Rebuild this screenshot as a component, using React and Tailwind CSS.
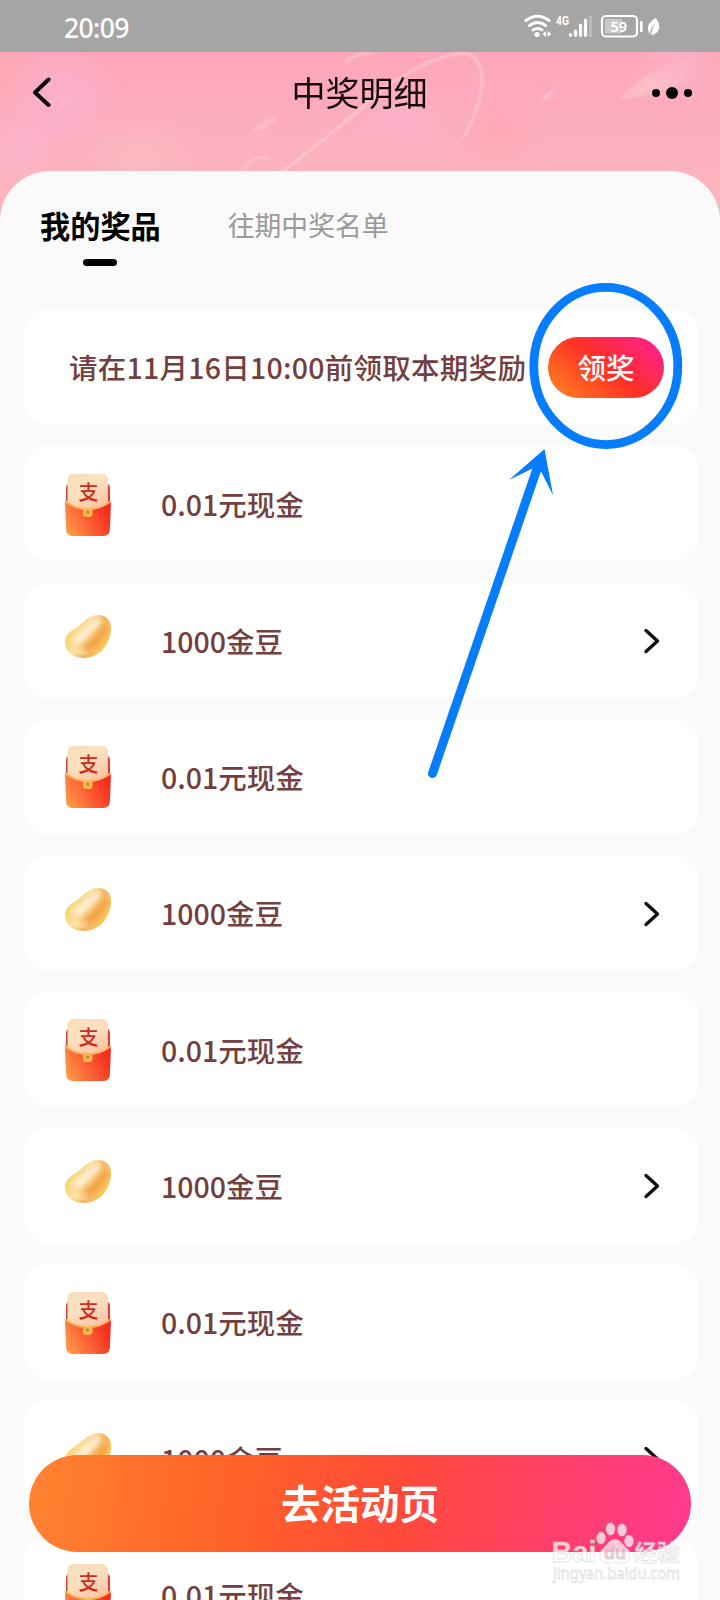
import React from "react";

const prizes = [
  { type: "cash", label: "0.01元现金" },
  { type: "bean", label: "1000金豆" },
  { type: "cash", label: "0.01元现金" },
  { type: "bean", label: "1000金豆" },
  { type: "cash", label: "0.01元现金" },
  { type: "bean", label: "1000金豆" },
  { type: "cash", label: "0.01元现金" },
  { type: "bean", label: "1000金豆" },
  { type: "cash", label: "0.01元现金" },
];

const StatusBar = () => (
  <div className="flex h-[52px] items-center justify-between bg-[#a5a5a5] pl-16 pr-[59px] text-white">
    <span className="pt-[5px] font-['Noto_Sans'] text-[26.5px] font-medium tracking-[-0.6px]">
      20:09
    </span>
    <svg width="138" height="26" viewBox="523 13 138 26" fill="none">
      {/* wifi */}
      <g stroke="#fff" strokeWidth="3" strokeLinecap="round">
        <path d="M526 20.500Q537.500 12 549 20.500" />
        <path d="M529.500 25.500Q537.500 19.500 545.500 25.500" />
        <path d="M533 30Q537.500 27 542 30" />
      </g>
      <circle cx="537" cy="34.400" r="2.500" fill="#fff" />
      <path d="M546 31v6l-3.500-3zM547.500 31v6l3.800-3z" fill="#fff" />
      <text
        x="556"
        y="24.500"
        fill="#fff"
        fontSize="12.500"
        fontWeight="700"
        fontFamily="Roboto, sans-serif"
        textLength="13"
        lengthAdjust="spacingAndGlyphs"
      >
        4G
      </text>
      {/* signal */}
      <g stroke="#fff" strokeWidth="3.200" strokeLinecap="round">
        <path d="M570.500 34.500v.8M575.500 31v4.300M580.500 25v10.300M585.500 20v15.300" />
        <path d="M590.500 16.500v19" opacity="0.25" />
      </g>
      {/* battery */}
      <rect x="602" y="16" width="35" height="20.500" rx="4" stroke="#fff" strokeWidth="2.200" />
      <rect x="605" y="19" width="17" height="14.500" rx="1.500" fill="#fff" opacity="0.4" />
      <text
        x="610.500"
        y="31.800"
        fill="#fff"
        fontSize="14.500"
        fontWeight="600"
        fontFamily="'Noto Sans', sans-serif"
        textLength="16.500"
      >
        59
      </text>
      <rect x="640" y="21" width="2.600" height="11" rx="1" fill="#fff" />
      <path d="M655.500 18c-5 3-8 7-7.500 11 .2 2 1 4 2 5.500 0-5 2-8 5-11-2 4-3.500 7-3.700 11.500 5-.5 8-4 8-8.500 0-3.500-1.500-6-3.800-8.500z" fill="#fff" />
    </svg>
  </div>
);

const Header = () => (
  <div className="relative h-[175px] overflow-hidden bg-linear-to-b from-[#fea6bb] via-[#fcb1be] via-60% to-[#fbb8bf]">
    <svg className="absolute inset-0" width="720" height="175" viewBox="0 52 720 175">
      <defs>
        <filter id="soft" x="-50%" y="-50%" width="200%" height="200%">
          <feGaussianBlur stdDeviation="14" />
        </filter>
        <filter id="fine">
          <feGaussianBlur stdDeviation="0.900" />
        </filter>
        <linearGradient id="petal" x1="0" y1="1" x2="1" y2="0">
          <stop offset="0" stopColor="#fcc0c8" />
          <stop offset="0.500" stopColor="#fbc6cb" />
          <stop offset="1" stopColor="#fbb4c8" stopOpacity="0.300" />
        </linearGradient>
      </defs>
      <g filter="url(#soft)">
        <ellipse cx="60" cy="100" rx="38" ry="36" fill="#fbb0cb" />
        <ellipse cx="20" cy="150" rx="26" ry="24" fill="#fbb2cb" />
        <ellipse cx="140" cy="155" rx="40" ry="18" fill="#f9bec4" opacity="0.800" />
        <ellipse cx="400" cy="122" rx="34" ry="16" fill="#fbb1cb" />
        <ellipse cx="500" cy="130" rx="30" ry="26" fill="#fea8b8" />
        <ellipse cx="680" cy="66" rx="26" ry="16" fill="#fbb6cc" />
        <ellipse cx="4" cy="70" rx="12" ry="30" fill="#ffa9b2" />
      </g>
      <g fill="none" stroke="#fccdce" filter="url(#fine)">
        <path d="M282 172Q340 128 382 90Q430 56 462 53Q482 54 482 82Q480 110 463 138" strokeWidth="2.200" />
        <path d="M240 172Q256 153 268 158" strokeWidth="1.600" />
        <path d="M345 62Q356 54 372 52" strokeWidth="2" />
      </g>
      <g filter="url(#fine)">
        <path d="M618 99Q642 76 664 66Q690 58 684 78Q672 92 650 94Q636 99 618 99z" fill="url(#petal)" opacity="0.700" />
        <path d="M251 132Q264 116 278 117Q272 128 251 132z" fill="#fcc3cd" opacity="0.700" />
        <path d="M540 103Q546 90 555 89Q550 98 540 103z" fill="#fcc6cf" opacity="0.800" />
      </g>
    </svg>
    <div className="relative flex h-20 items-center justify-between pl-8 pr-7">
      <svg width="20" height="30" viewBox="0 0 20 30" fill="none">
        <path d="M16.500 2.500L3 15.500l13.500 12.500" stroke="#0b0305" strokeWidth="4" strokeLinecap="round" strokeLinejoin="round" />
      </svg>
      <h1 className="ml-[15px] pb-[2px] text-[34px] text-[#14070a]">
        中奖明细
      </h1>
      <div className="flex items-center gap-[6px] pt-px">
        <i className="size-[8px] rounded-full bg-black" />
        <i className="size-[12px] rounded-full bg-black" />
        <i className="size-[8px] rounded-full bg-black" />
      </div>
    </div>
  </div>
);

const RedPacket = () => (
  <svg width="48" height="64" viewBox="0 0 48 64">
    <defs>
      <linearGradient id="flap" x1="0" y1="0" x2="0.600" y2="1">
        <stop offset="0" stopColor="#f9dfb6" />
        <stop offset="0.500" stopColor="#fbe0c0" />
        <stop offset="1" stopColor="#fdc5a4" />
      </linearGradient>
      <linearGradient id="pocket" x1="0" y1="0.800" x2="1" y2="0.400">
        <stop offset="0" stopColor="#ff9c48" />
        <stop offset="0.500" stopColor="#fd5f34" />
        <stop offset="1" stopColor="#f52a1e" />
      </linearGradient>
    </defs>
    <rect x="2" y="10" width="44" height="26" rx="5" fill="#cf4136" />
    <path d="M9 1h30q5 0 5 6v30H3.500V7q0-6 5.500-6z" fill="url(#flap)" />
    <path d="M1 28q10 8 23 8t23-8l-1 27q0 8-7 8H9q-7 0-7-8z" fill="url(#pocket)" />
    <path d="M1 28q10 8 23 8t23-8" fill="none" stroke="#fcb860" strokeWidth="2" />
    <rect x="19" y="35" width="9.500" height="9" rx="3" fill="#f9b94e" />
    <circle cx="23.700" cy="39" r="1.500" fill="#d6761c" />
    <text x="24.500" y="27" textAnchor="middle" fontSize="20" fontWeight="500" fill="#cf2b1f" fontFamily="'Noto Sans CJK SC', sans-serif">
      支
    </text>
  </svg>
);

const GoldBean = () => (
  <svg width="48" height="64" viewBox="0 0 48 64">
    <defs>
      <linearGradient id="bean" x1="0.100" y1="0.300" x2="0.900" y2="0.700">
        <stop offset="0" stopColor="#fbd468" />
        <stop offset="0.350" stopColor="#fbdca0" />
        <stop offset="0.650" stopColor="#f6b45c" />
        <stop offset="1" stopColor="#fbc860" />
      </linearGradient>
      <filter id="glow" x="-40%" y="-40%" width="180%" height="180%">
        <feGaussianBlur stdDeviation="2.400" />
      </filter>
    </defs>
    <path d="M12 19C20 13 24 6 35 6C43 6 48 13 47 21C46 35 36 49 20 49C8 49 1 42 1 33C1 27 5 23 12 19z" fill="url(#bean)" />
    <path d="M25 37Q36 33 41 20" fill="none" stroke="#ee9838" strokeWidth="6" strokeLinecap="round" opacity="0.700" filter="url(#glow)" />
    <path d="M13 30Q22 25 33 13" fill="none" stroke="#fff3dc" strokeWidth="8" strokeLinecap="round" opacity="0.850" filter="url(#glow)" />
    <path d="M10 40Q14 45 21 44" fill="none" stroke="#fff0c0" strokeWidth="4" strokeLinecap="round" opacity="0.700" filter="url(#glow)" />
  </svg>
);

const PrizeRow = ({ type, label }) => (
  <li className="flex h-[115px] shrink-0 items-center rounded-3xl bg-white pl-10 pr-[37px] pt-[2px]">
    {type === "cash" ? <RedPacket /> : <GoldBean />}
    <span className="ml-[49px] text-[28.500px] font-medium text-[#733f40]">
      {label}
    </span>
    {type === "bean" && (
      <svg className="ml-auto" width="18" height="26" viewBox="0 0 18 26" fill="none">
        <path d="M3 2.500L14.500 13L3 23.500" stroke="#111" strokeWidth="3.400" strokeLinecap="round" strokeLinejoin="round" />
      </svg>
    )}
  </li>
);

// Blue ring and arrow pointing at the claim button
const Callout = () => (
  <svg className="pointer-events-none absolute left-[420px] top-[270px]" width="280" height="520" viewBox="420 270 280 520">
    <ellipse cx="605.800" cy="366" rx="72" ry="78.600" fill="none" stroke="#057dfd" strokeWidth="8.800" />
    <path d="M432.500 773.500L538 466" stroke="#057dfd" strokeWidth="9" strokeLinecap="round" />
    <path d="M544.500 449L553 495L541 471.500L532.500 468.500L509 480z" fill="#057dfd" />
  </svg>
);

const Watermark = () => (
  <svg className="pointer-events-none absolute left-[545px] top-[1515px]" width="145" height="75" viewBox="545 1515 145 75">
    <g fill="#fff" fillOpacity="0.720" stroke="#c4c4c4" strokeOpacity="0.500" strokeWidth="0.800">
      <text x="551.500" y="1561.500" fontSize="29" fontWeight="700" fontFamily="'Liberation Sans', sans-serif" textLength="45" lengthAdjust="spacingAndGlyphs">
        Bai
      </text>
      <ellipse cx="601" cy="1538" rx="4.500" ry="6" />
      <ellipse cx="610.500" cy="1529" rx="4.500" ry="6.200" />
      <ellipse cx="622" cy="1530" rx="4.500" ry="6.200" />
      <ellipse cx="629" cy="1541" rx="4.500" ry="6" />
      <path d="M615 1539.500c6 0 8 6 12 9 5.500 4 4 13.500-4 14.500-4 .4-6-.8-8-.8s-4 1.200-8 .8c-8-1-9.500-10.500-4-14.500 4-3 6-9 12-9z" />
      <text x="634.500" y="1560.500" fontSize="22.500" fontWeight="700" fontFamily="'Noto Sans CJK SC', sans-serif">
        经验
      </text>
      <text x="553" y="1579" fontSize="16.500" fontFamily="'Noto Sans', sans-serif" textLength="127" lengthAdjust="spacingAndGlyphs">
        jingyan.baidu.com
      </text>
      <text x="604" y="1559" fontSize="18" fontWeight="700" fill="#ff8ba6" fillOpacity="0.450" strokeOpacity="0.700" fontFamily="'Liberation Sans', sans-serif">
        du
      </text>
    </g>
  </svg>
);

export default function App() {
  return (
    <div className="relative h-[1600px] w-[720px] overflow-hidden bg-[#fafafa] font-['Noto_Sans_CJK_SC',sans-serif]">
      <StatusBar />
      <Header />

      <main className="relative -mt-14 rounded-t-[50px] bg-[#fafafa] pl-6 pr-[22px]">
        <nav className="flex h-[139px] items-start pl-4 pt-[29px]">
          <div className="flex flex-col items-center">
            <span className="text-[30.200px] font-bold leading-[50px] text-black">
              我的奖品
            </span>
            <i className="mt-[9px] h-[7px] w-[34px] rounded-full bg-black" />
          </div>
          <span className="ml-[67px] text-[26.800px] leading-[50px] text-[#999]">
            往期中奖名单
          </span>
        </nav>

        <section className="mb-[21.300px] flex h-[115px] items-center justify-between rounded-3xl bg-white pl-[45px] pr-[34px]">
          <p className="whitespace-nowrap text-[28.500px] font-medium tracking-[0.26px] text-[#733f40]">
            请在11月16日10:00前领取本期奖励
          </p>
          <button className="h-[61px] w-[116px] rounded-full bg-linear-[40deg,#ff8a20,#ff3026_50%,#ff2090_95%] pb-px text-[28.500px] font-medium text-white">
            领奖
          </button>
        </section>

        <ul className="flex flex-col gap-[21.300px]">
          {prizes.map((p, i) => (
            <PrizeRow key={i} type={p.type} label={p.label} />
          ))}
        </ul>
      </main>

      <button className="absolute left-[29px] top-[1455px] h-[97px] w-[662px] rounded-full bg-linear-[100deg,#ff8431,#ff6528_28%,#ff4a38_55%,#ff3e70_82%,#ff3a90] pb-1 text-[39.500px] font-bold text-white">
        去活动页
      </button>

      <Callout />
      <Watermark />
    </div>
  );
}
